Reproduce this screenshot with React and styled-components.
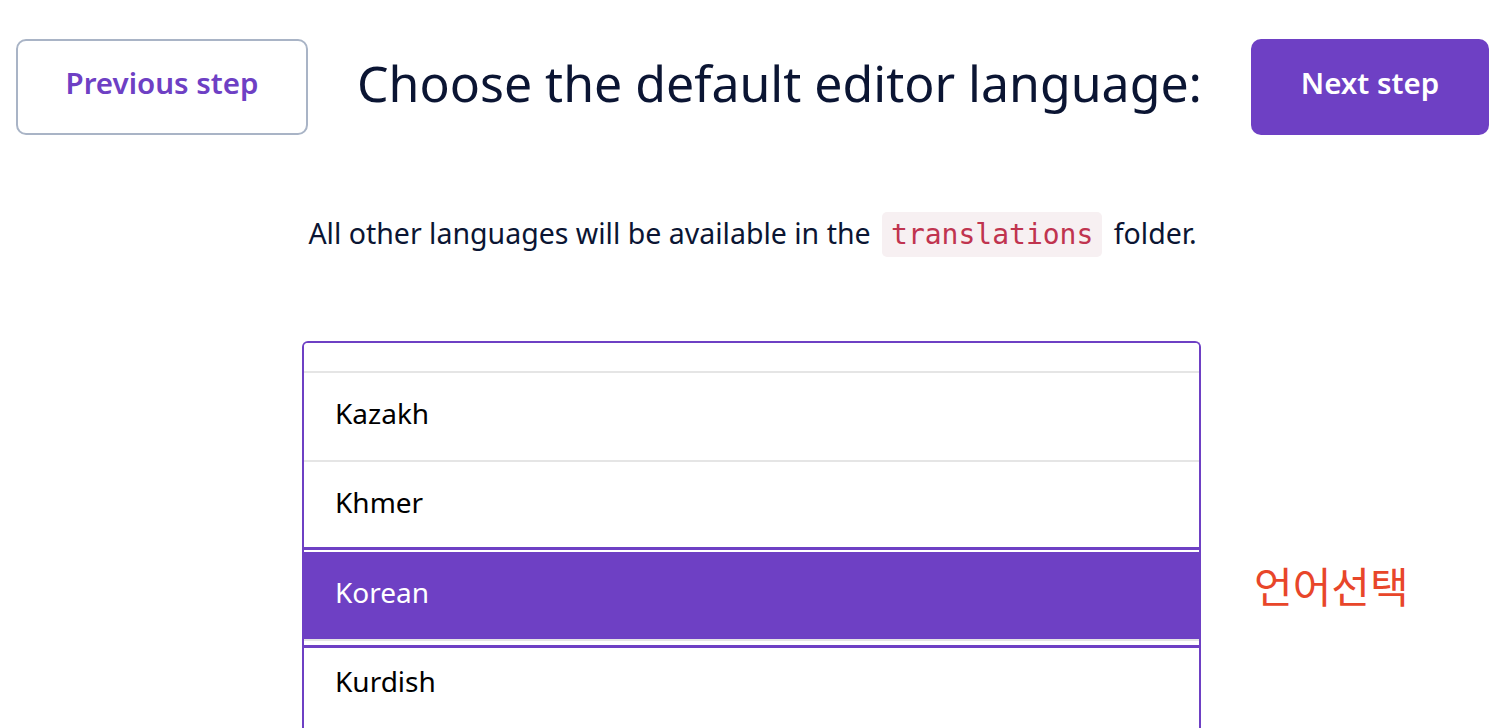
import React from 'react'
import styled, { createGlobalStyle } from 'styled-components'

const GlobalStyle = createGlobalStyle`
  html, body {
    margin: 0;
    padding: 0;
    background: #ffffff;
    font-family: "Noto Sans", "Noto Sans CJK KR", sans-serif;
    color: #0b1533;
    overflow: hidden;
  }
`;

const languages = ['Kannada', 'Kazakh', 'Khmer', 'Korean', 'Kurdish', 'Kyrgyz'];

function App() {
  return (
    <Page>
      <GlobalStyle />
      <Header>
        <PrevButton>Previous step</PrevButton>
        <Title>Choose the default editor language:</Title>
        <NextButton>Next step</NextButton>
      </Header>
      <Note>
        All other languages will be available in the <Code>translations</Code> folder.
      </Note>
      <ListRow>
        <ListBox>
          <List>
            {languages.map((lang) => (
              <Option key={lang} selected={lang === 'Korean'}>{lang}</Option>
            ))}
          </List>
        </ListBox>
        <Annotation>언어선택</Annotation>
      </ListRow>
    </Page>
  )
}

export default App

const Page = styled.div`
  width: 1510px;
  height: 728px;
  box-sizing: border-box;
  padding: 39px 21px 0 16px;
`;

const Header = styled.div`
  display: flex;
  align-items: center;
  justify-content: space-between;
`;

const ButtonBase = styled.button`
  height: 96px;
  box-sizing: border-box;
  border-radius: 10px;
  font-family: "Noto Sans", sans-serif;
  font-size: 29.5px;
  font-weight: 600;
  cursor: pointer;
  padding: 0 0 9px;
`;

const PrevButton = styled(ButtonBase)`
  width: 292px;
  background: #ffffff;
  color: #6e40c4;
  border: 2px solid #a9b4c6;
`;

const NextButton = styled(ButtonBase)`
  width: 238px;
  background: #6e40c4;
  color: #ffffff;
  border: none;
`;

const Title = styled.h1`
  margin: 0 0 9px;
  font-size: 50px;
  font-weight: 400;
  color: #0b1533;
`;

const Note = styled.p`
  margin: 74px 0 0;
  text-align: center;
  font-size: 28.5px;
  line-height: 48px;
  color: #0b1533;
`;

const Code = styled.code`
  display: inline-block;
  background: #f7f0f2;
  color: #c0344f;
  font-family: "DejaVu Sans Mono", monospace;
  font-size: 28px;
  line-height: 45px;
  padding: 0 9px;
  border-radius: 5px;
  margin: 0 4px;
`;

const ListRow = styled.div`
  display: flex;
  align-items: flex-start;
  margin-top: 84px;
  padding-left: 286px;
`;

const ListBox = styled.div`
  width: 899px;
  height: 420px;
  box-sizing: border-box;
  border: 2px solid #6e40c4;
  border-bottom: none;
  border-radius: 6px 6px 0 0;
  overflow: hidden;
  flex-shrink: 0;
`;

const List = styled.ul`
  list-style: none;
  margin: -60px 0 0;
  padding: 0;
`;

const Option = styled.li`
  position: relative;
  z-index: ${(p) => (p.selected ? 1 : 0)};
  height: 87.5px;
  box-sizing: border-box;
  display: flex;
  align-items: center;
  padding: 0 0 7px 31px;
  height: 89.5px;
  border-bottom: 2px solid #e5e5e5;
  font-size: 28px;
  color: ${(p) => (p.selected ? '#ffffff' : '#000000')};
  background: ${(p) => (p.selected ? '#6e40c4' : '#ffffff')};
  box-shadow: ${(p) =>
    p.selected
      ? '0 -2px 0 #ffffff, 0 -5px 0 #6e40c4, 0 4px 0 #ffffff, 0 7px 0 #6e40c4'
      : 'none'};
`;

const Annotation = styled.div`
  margin: 213px 0 0 53px;
  font-size: 42px;
  color: #e8462a;
  font-family: "Noto Sans CJK KR", sans-serif;
`;
